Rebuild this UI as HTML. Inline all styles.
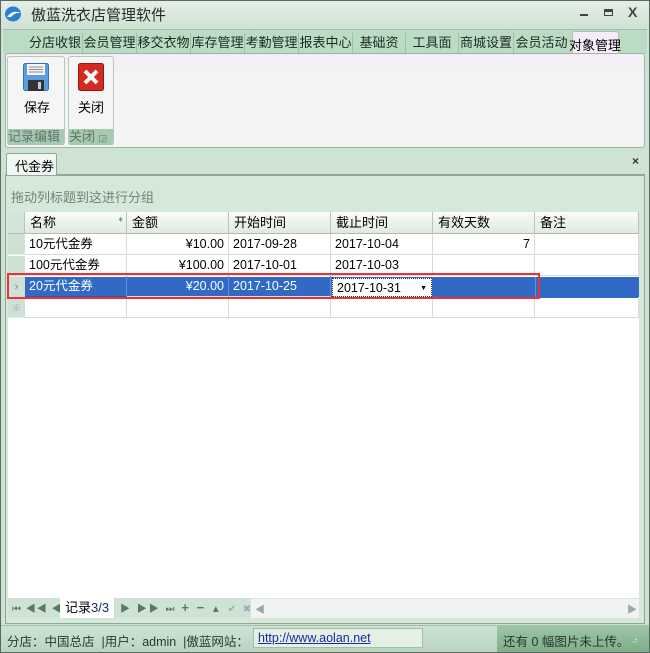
<!DOCTYPE html>
<html><head><meta charset="utf-8"><style>
*{margin:0;padding:0;box-sizing:border-box}
body{width:650px;height:653px;overflow:hidden;background:#d6e6d9;font-family:"Liberation Sans","Noto Sans CJK SC",sans-serif;font-size:12px;color:#000;position:relative}
.a{position:absolute}
.t{white-space:nowrap}
#win{left:0;top:0;width:650px;height:653px;border:1px solid #5a6a5e;background:#cfe3d4}
#title{left:1px;top:1px;width:648px;height:27px;background:linear-gradient(#e4eee6,#cfe2d3)}
.tab{top:33px;height:20px;line-height:20px;font-size:13px;text-align:center;border-right:1px solid #9fbfa8;color:#1c2a20;white-space:nowrap;overflow:hidden}
#ribbon{left:5px;top:53px;width:640px;height:95px;border:1px solid #9bb7a3;border-radius:3px;background:linear-gradient(#f5ecf8,#f4f4f4 20px)}
.grp{top:56px;height:89px;border:1px solid #b4c9b9;border-radius:3px;background:#f5f5f5;overflow:hidden}
.gl{height:16px;background:#a7c9b1;color:#5d7866;font-size:13px;line-height:16px;overflow:hidden}
#doc{left:5px;top:175px;width:640px;height:449px;border:1px solid #8ea896;background:#d6e8da}
.hd{top:212px;height:22px;line-height:22px;background:linear-gradient(#fafcfa,#dfe9e1);border-right:1px solid #b5c7b9;border-bottom:1px solid #aebfb2;padding-left:5px;font-size:13px}
.c{height:21px;line-height:21px;border-right:1px solid #d6dcd8;border-bottom:1px solid #d6dcd8;padding:0 4px;font-size:12.5px;white-space:nowrap}
.ind{left:8px;width:17px;background:#cfe1d4;border-bottom:1px solid #e8eee9}
</style></head><body>
<div id="win" class="a"></div>
<div id="title" class="a"></div>
<svg class="a" style="left:4px;top:6px" width="18" height="16" viewBox="0 0 18 16"><ellipse cx="9" cy="8" rx="8" ry="7.5" fill="#2a7fd0"/><path d="M3 11 Q9 3 17 7 Q11 6 7 11Z" fill="#fff"/></svg>
<div class="a t" style="left:31px;top:4px;font-size:15px;color:#2a2a2a">傲蓝洗衣店管理软件</div>
<div class="a" style="left:580px;top:14px;width:8px;height:2px;background:#444"></div>
<div class="a" style="left:604px;top:9px;width:9px;height:7px;border:1px solid #444;border-top-width:3px"></div>
<div class="a t" style="left:628px;top:4px;font-size:14px;font-weight:bold;color:#444">X</div>
<div class="a" style="left:3px;top:29px;width:644px;height:25px;background:#bcdbc4;border-top:1px solid #9fbfa8"></div>
<div class="a tab" style="left:29px;width:54px;text-align:right;padding-right:2px">分店收银</div>
<div class="a tab" style="left:83px;width:54px">会员管理</div>
<div class="a tab" style="left:137px;width:54px">移交衣物</div>
<div class="a tab" style="left:191px;width:54px">库存管理</div>
<div class="a tab" style="left:245px;width:54px">考勤管理</div>
<div class="a tab" style="left:299px;width:54px">报表中心</div>
<div class="a tab" style="left:353px;width:53px">基础资</div>
<div class="a tab" style="left:406px;width:53px">工具面</div>
<div class="a tab" style="left:459px;width:55px">商城设置</div>
<div class="a tab" style="left:514px;width:55px;border-right:none">会员活动</div>
<div class="a" style="left:572px;top:31px;width:47px;height:24px;background:#f4ecf8;border:1px solid #a9c3b0;border-bottom:none;border-radius:3px 3px 0 0"></div>
<div class="a t" style="left:569px;top:35px;font-size:13px">对象管理</div>
<div id="ribbon" class="a"></div>
<div class="a grp" style="left:7px;width:58px"></div>
<div class="a grp" style="left:68px;width:46px"></div>
<div class="a gl t" style="left:8px;top:129px;width:56px">记录编辑</div>
<div class="a gl t" style="left:69px;top:129px;width:44px">关闭 <span style="font-size:9px">◲</span></div>
<svg class="a" style="left:23px;top:63px" width="26" height="28" viewBox="0 0 26 28"><rect x="0.5" y="0.5" width="25" height="27" rx="2" fill="#5b9de0" stroke="#3a6fb0"/><rect x="4" y="1" width="18" height="11" fill="#f4f6f8"/><path d="M6 4h14M6 6.5h14M6 9h14" stroke="#889" stroke-width="1"/><rect x="5" y="17" width="16" height="11" fill="#333"/><rect x="15" y="19" width="3" height="7" fill="#ccc"/></svg>
<div class="a t" style="left:24px;top:97px;font-size:13px">保存</div>
<svg class="a" style="left:78px;top:63px" width="26" height="28" viewBox="0 0 26 28"><rect x="0.5" y="0.5" width="25" height="27" rx="2" fill="#d42a20" stroke="#8a1a14"/><path d="M7 8l12 12M19 8L7 20" stroke="#fff" stroke-width="4"/></svg>
<div class="a t" style="left:78px;top:97px;font-size:13px">关闭</div>
<div class="a" style="left:5px;top:174px;width:640px;height:1px;background:#8ea896"></div>
<div class="a" style="left:6px;top:153px;width:51px;height:23px;background:#f2f7f3;border:1px solid #8ea896;border-bottom:none;border-radius:2px 2px 0 0"></div>
<div class="a t" style="left:15px;top:156px;font-size:13px">代金券</div>
<div class="a t" style="left:632px;top:154px;font-weight:bold;font-size:12px;color:#333">×</div>
<div id="doc" class="a"></div>
<div class="a t" style="left:11px;top:187px;font-size:13px;color:#6a8772">拖动列标题到这进行分组</div>
<div class="a" style="left:8px;top:212px;width:631px;height:386px;background:#fff;border-top:1px solid #9bb3a0"></div>
<div class="a hd" style="left:8px;width:17px;background:#d3e3d7"></div>
<div class="a hd" style="left:25px;width:102px">名称<span style="position:absolute;right:3px;top:-4px;font-size:9px;color:#7aa884">♦</span></div>
<div class="a hd" style="left:127px;width:102px">金额</div>
<div class="a hd" style="left:229px;width:102px">开始时间</div>
<div class="a hd" style="left:331px;width:102px">截止时间</div>
<div class="a hd" style="left:433px;width:102px">有效天数</div>
<div class="a hd" style="left:535px;width:104px">备注</div>
<div class="a ind" style="top:234px;height:21px"></div>
<div class="a c" style="left:25px;top:234px;width:102px">10元代金券</div>
<div class="a c" style="left:127px;top:234px;width:102px;text-align:right">¥10.00</div>
<div class="a c" style="left:229px;top:234px;width:102px">2017-09-28</div>
<div class="a c" style="left:331px;top:234px;width:102px">2017-10-04</div>
<div class="a c" style="left:433px;top:234px;width:102px;text-align:right">7</div>
<div class="a c" style="left:535px;top:234px;width:104px"></div>
<div class="a ind" style="top:256px;height:21px"></div>
<div class="a c" style="left:25px;top:255px;width:102px">100元代金券</div>
<div class="a c" style="left:127px;top:255px;width:102px;text-align:right">¥100.00</div>
<div class="a c" style="left:229px;top:255px;width:102px">2017-10-01</div>
<div class="a c" style="left:331px;top:255px;width:102px">2017-10-03</div>
<div class="a c" style="left:433px;top:255px;width:102px"></div>
<div class="a c" style="left:535px;top:255px;width:104px"></div>
<div class="a ind" style="top:277px;height:21px;color:#6a8a72;font-size:11px;text-align:center;line-height:21px">›</div>
<div class="a" style="left:25px;top:277px;width:614px;height:21px;background:#316ac5"></div>
<div class="a c" style="left:25px;top:276px;width:102px;color:#fff;border-color:#2a5aa8;border-right-color:#6a8fd0">20元代金券</div>
<div class="a c" style="left:127px;top:276px;width:102px;text-align:right;color:#fff;border-right-color:#6a8fd0">¥20.00</div>
<div class="a c" style="left:229px;top:276px;width:102px;color:#fff;border-right-color:#6a8fd0">2017-10-25</div>
<div class="a c" style="left:332px;top:278px;width:100px;height:19px;line-height:19px;background:#fff;border:1px dotted #333">2017-10-31<span style="position:absolute;right:4px;top:0;font-size:7px">▼</span></div>
<div class="a" style="left:535px;top:277px;width:1px;height:21px;background:#6a8fd0"></div>
<div class="a ind" style="top:298px;height:20px;color:#9ab;font-size:9px;text-align:center;line-height:20px">※</div>
<div class="a c" style="left:25px;top:297px;width:102px"></div>
<div class="a c" style="left:127px;top:297px;width:102px"></div>
<div class="a c" style="left:229px;top:297px;width:102px"></div>
<div class="a c" style="left:331px;top:297px;width:102px"></div>
<div class="a c" style="left:433px;top:297px;width:102px"></div>
<div class="a c" style="left:535px;top:297px;width:104px"></div>
<div class="a" style="left:7px;top:273px;width:533px;height:26px;border:2px solid #e8323a"></div>
<div class="a" style="left:8px;top:598px;width:631px;height:20px;background:#f0f3f1;border-top:1px solid #dfe6e1"></div>
<div class="a" style="left:8px;top:598px;width:243px;height:20px;background:#cfe3d4"></div>
<div class="a t" style="left:12px;top:600px;font-size:10px;color:#5a7a64;letter-spacing:1px">⏮ ◀◀ ◀</div>
<div class="a t" style="left:60px;top:598px;width:54px;height:20px;background:#fff;font-size:13px;line-height:20px;padding-left:5px">记录<span style="color:#1a2a6a">3/3</span></div>
<div class="a t" style="left:120px;top:600px;font-size:10px;color:#5a7a64;letter-spacing:2px">▶ ▶▶ ⏭ <b style="font-size:13px">+ −</b> ▲ <span style="color:#9ab">✔ ✖</span></div>
<div class="a t" style="left:255px;top:601px;font-size:10px;color:#9aa">◀</div>
<div class="a t" style="left:627px;top:601px;font-size:10px;color:#9aa">▶</div>
<div class="a" style="left:1px;top:625px;width:648px;height:27px;background:linear-gradient(#cfe3d4,#b9d5c0);border-top:1px solid #9fbfa8"></div>
<div class="a t" style="left:7px;top:631px;font-size:12.5px;color:#2a3a2e">分店：中国总店 &nbsp;|用户：admin &nbsp;|傲蓝网站：</div>
<div class="a" style="left:253px;top:628px;width:170px;height:20px;background:#e4f0e6;border:1px solid #9fbfa8"></div>
<div class="a t" style="left:258px;top:631px;font-size:12.5px;color:#1a2aa0;text-decoration:underline">http://www.aolan.net</div>
<div class="a" style="left:497px;top:626px;width:152px;height:26px;background:linear-gradient(#9ec5a6,#7fae8b)"></div>
<div class="a t" style="left:503px;top:631px;font-size:12.5px;color:#203a28">还有 0 幅图片未上传。</div>
<div class="a t" style="left:632px;top:636px;font-size:8px;color:#eef">⠴</div>
</body></html>
